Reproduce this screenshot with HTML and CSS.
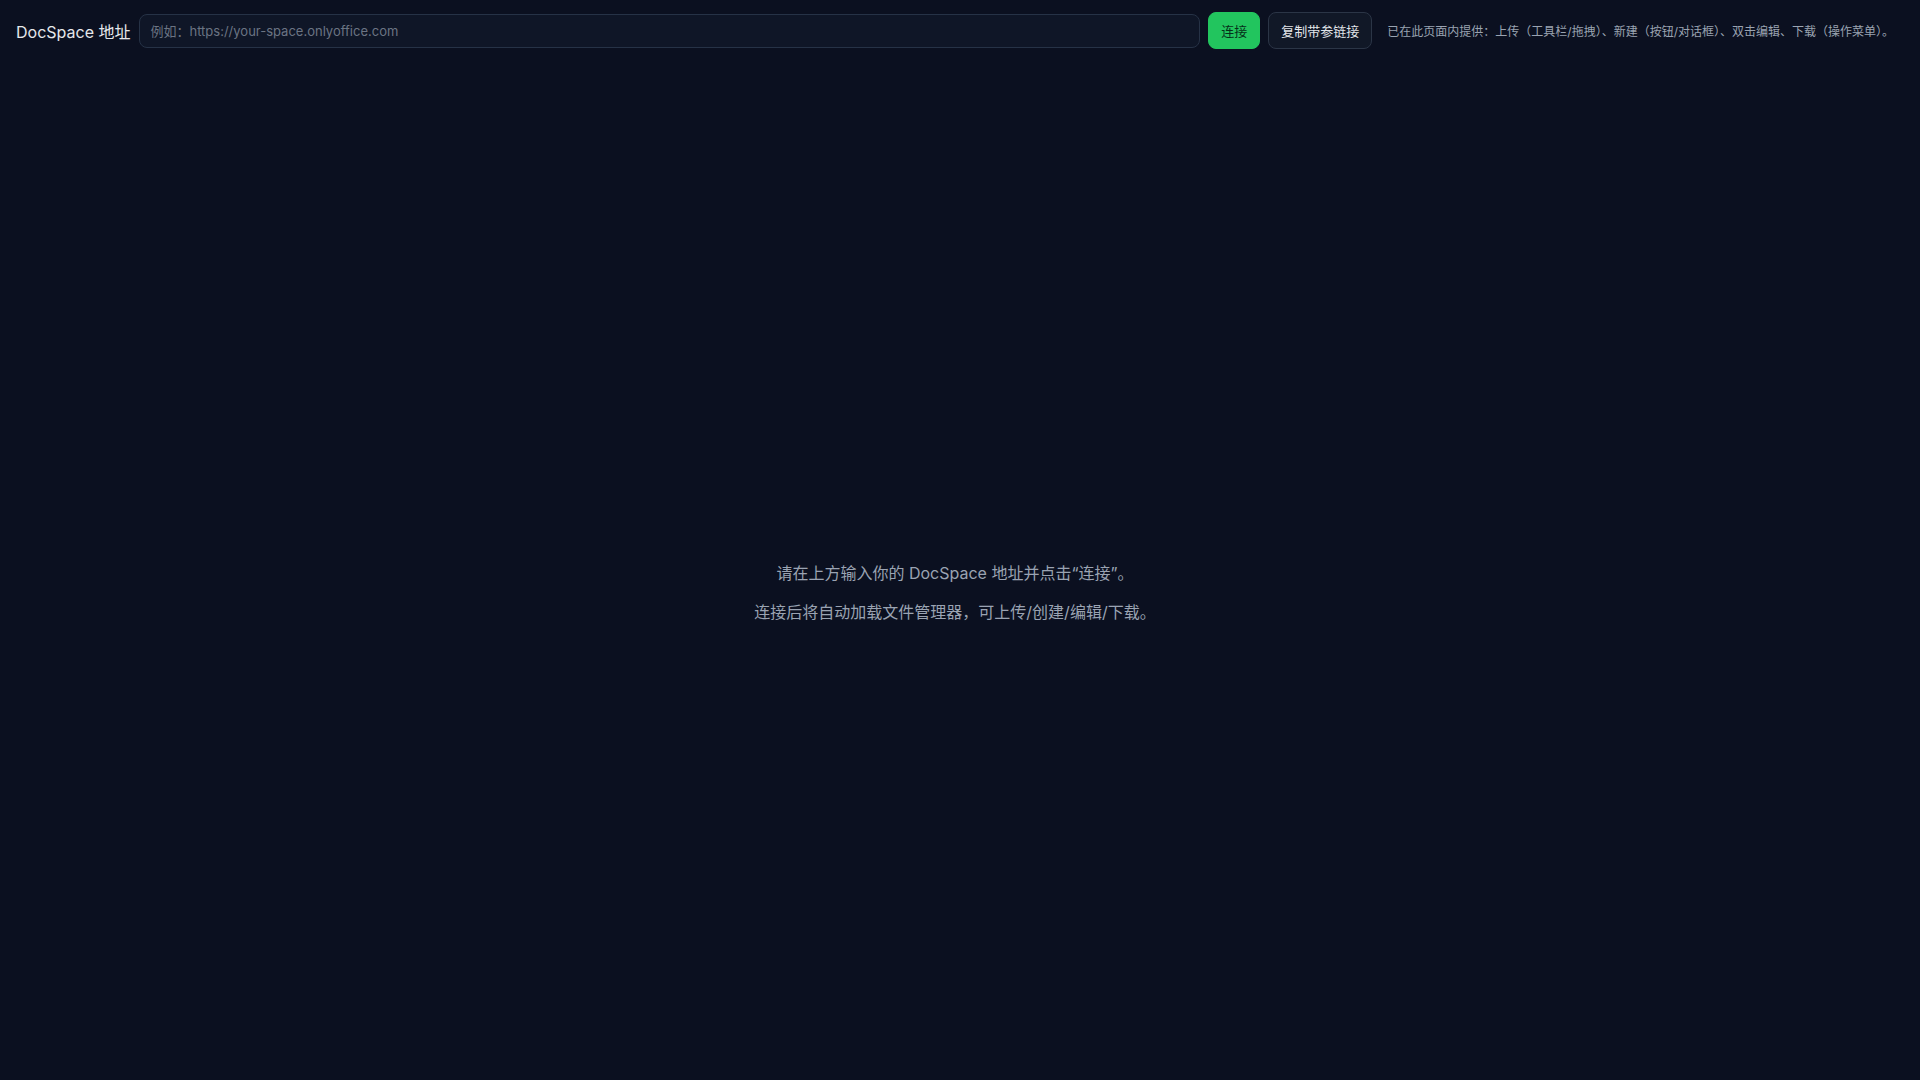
FILE: index.html
```html
<!DOCTYPE html>
<html lang="zh-CN">
    <head>
        <meta charset="UTF-8">
        <meta name="viewport" content="width=device-width, initial-scale=1.0">
        <title>DocSpace 文件管理器</title>
        <link rel="stylesheet" href="styles.css">
    </head>

    <body>
        <header class="topbar">
            <label class="url-label" for="docspace-url">DocSpace 地址</label>
            <input type="text" id="docspace-url" class="url-input" placeholder="例如：https://your-space.onlyoffice.com">
            <button id="connect-btn" class="btn btn-primary">连接</button>
            <button id="copy-link-btn" class="btn">复制带参链接</button>
            <span class="hint">已在此页面内提供：上传（工具栏/拖拽）、新建（按钮/对话框）、双击编辑、下载（操作菜单）。</span>
        </header>

        <main class="manager" id="manager">
            <div class="empty-state">
                <p>请在上方输入你的 DocSpace 地址并点击“连接”。</p>
                <p>连接后将自动加载文件管理器，可上传/创建/编辑/下载。</p>
            </div>
        </main>
    </body>
</html>
```

FILE: styles.css
```css
::-webkit-scrollbar {
    width: 10px;
}

::-webkit-scrollbar-track {
    background-color: #ffffff;
}

::-webkit-scrollbar-thumb {
    background-color: #161616;
    border: 2px solid #ffffff;
    border-radius: 5px;
}

body {
    margin: 0;
    background-color: #0b1020;
    color: #e5e7eb;
    font-family: Inter, "Noto Sans CJK SC", sans-serif;
}

.topbar {
    display: flex;
    align-items: center;
    gap: 8px;
    padding: 12px 26px 12px 16px;
}

.url-label {
    font-size: 16px;
    color: #e5e7eb;
    white-space: nowrap;
}

.url-input {
    flex: 1;
    min-width: 0;
    height: 34px;
    box-sizing: border-box;
    padding: 0 10px;
    margin-left: 1px;
    background-color: #0f1627;
    border: 1px solid #263246;
    border-radius: 8px;
    color: #e5e7eb;
    font-family: Inter, "Noto Sans CJK SC", sans-serif;
    font-size: 13px;
    outline: none;
}

.url-input::placeholder {
    color: #6b7483;
}

.btn {
    height: 37px;
    padding: 0 12px;
    background-color: #111827;
    border: 1px solid #2b3546;
    border-radius: 8px;
    color: #e2e5ea;
    font-family: Inter, "Noto Sans CJK SC", sans-serif;
    font-size: 13px;
    font-weight: 400;
    white-space: nowrap;
    cursor: pointer;
}

.btn-primary {
    background-color: #22c55e;
    border-color: #22c55e;
    color: #06301a;
}

.hint {
    margin-left: 7px;
    font-size: 12px;
    color: #9aa3b1;
    white-space: nowrap;
}

.manager {
    display: flex;
    align-items: center;
    justify-content: center;
    height: calc(100vh - 17px);
    padding-right: 10px;
}

.empty-state {
    text-align: center;
    color: #9aa3b2;
    font-size: 16px;
}

.empty-state p {
    margin: 0;
    line-height: 24px;
}

.empty-state p + p {
    margin-top: 15px;
}
```
